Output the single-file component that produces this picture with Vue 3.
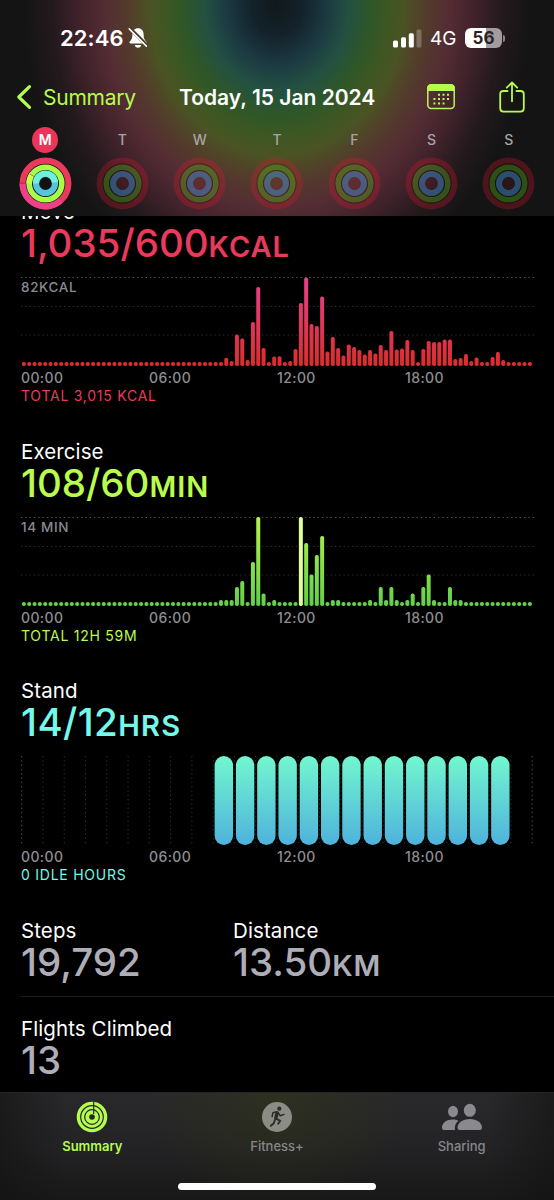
<script setup>
const SLOTS = 96
const PITCH = 5.326
const CHART_HEIGHT = 89

const MOVE = {
  38: 8.3, 39: 5, 40: 31.5, 41: 27.5, 42: 6, 43: 44, 44: 79, 45: 18, 47: 9.5,
  48: 9.7, 50: 5, 51: 17, 52: 63, 53: 88.5, 54: 42, 55: 40, 56: 69.5, 57: 14.5,
  58: 29, 59: 18, 60: 10.5, 61: 21.5, 62: 19, 63: 16, 64: 11.5, 65: 16, 66: 12.5,
  67: 21, 68: 16, 69: 35, 70: 16.5, 71: 17.5, 72: 26, 73: 16, 75: 17, 76: 25,
  77: 24, 78: 24, 79: 26.5, 80: 26.5, 81: 7, 82: 8, 83: 12, 84: 5, 85: 8.5,
  88: 9, 89: 14, 90: 6
}

const EXERCISE = {
  37: 6, 38: 6, 39: 6, 40: 19, 41: 25, 43: 44, 44: 89, 45: 12.5, 47: 6, 52: 89,
  53: 63, 54: 31.5, 55: 51, 56: 70, 58: 6, 59: 6, 65: 6, 67: 19, 68: 6, 69: 19,
  70: 6, 72: 6, 73: 12.5, 75: 19, 76: 31.5, 77: 6, 80: 19, 81: 6, 82: 6
}

function toBars(values) {
  return Array.from({ length: SLOTS }, (_, i) => {
    const h = values[i] ?? 4
    return { x: 0.9 + i * PITCH, y: CHART_HEIGHT - h, h }
  })
}

const hours = ['00:00', '06:00', '12:00', '18:00']

const sections = [
  { id: 'move', title: 'Move', value: '1,035/600', unit: 'KCAL', max: '82KCAL', total: 'TOTAL 3,015 KCAL', bars: toBars(MOVE) },
  { id: 'exercise', title: 'Exercise', value: '108/60', unit: 'MIN', max: '14 MIN', total: 'TOTAL 12H 59M', bars: toBars(EXERCISE), peak: 52 },
  { id: 'stand', title: 'Stand', value: '14/12', unit: 'HRS', total: '0 IDLE HOURS' }
]

const standHours = Array.from({ length: 14 }, (_, i) => 9 + i)
const days = ['M', 'T', 'W', 'T', 'F', 'S', 'S']
</script>

<template>
  <div class="screen">
    <header>
      <div class="status">
        <span class="clock">22:46</span>
        <svg class="bell" width="20" height="22" viewBox="0 0 20 22">
          <path d="M10 1.2c-3.4 0-5.6 2.4-5.6 6 0 4.200-1 5.600-2.600 7.300-.8.9-.4 2 .8 2h14.800c1.200 0 1.600-1.100.8-2-1.600-1.700-2.600-3.100-2.600-7.300 0-3.600-2.200-6-5.600-6z" fill="#fff" />
          <path d="M6.800 18h6.400c-.3 1.700-1.500 2.700-3.200 2.700S7.100 19.700 6.800 18z" fill="#fff" />
          <path d="M1.800 1.300l17.200 17.200" stroke="#4d3a2b" stroke-width="3.600" />
          <path d="M1.200 1.900l17.200 17.200" stroke="#fff" stroke-width="1.500" stroke-linecap="round" />
        </svg>
        <span class="spacer"></span>
        <svg class="signal" width="29" height="19" viewBox="0 0 29 19" fill="#fff">
          <rect x="0" y="11.500" width="5" height="7" rx="1.500" />
          <rect x="8" y="8.200" width="5" height="10.300" rx="1.500" />
          <rect x="15.800" y="4.200" width="5" height="14.300" rx="1.500" />
          <rect x="23.500" y=".5" width="5" height="18" rx="1.500" opacity=".25" />
        </svg>
        <span class="network">4G</span>
        <span class="battery"><b>56</b></span>
        <span class="nub"></span>
      </div>

      <nav class="bar">
        <svg width="16" height="26" viewBox="0 0 16 26" fill="none">
          <path d="M13.500 2.700L2.800 13l10.700 10.300" stroke="#b5fc4c" stroke-width="3.200" stroke-linecap="round" stroke-linejoin="round" />
        </svg>
        <span class="back">Summary</span>
        <span class="date">Today, 15 Jan 2024</span>
        <svg class="calendar" width="28" height="26" viewBox="0 0 28 26">
          <rect x=".8" y=".8" width="26.400" height="23.800" rx="3.500" fill="none" stroke="#b5fc4c" stroke-width="1.500" />
          <path d="M.2 7V4.200Q.2.200 4.200.2h19.600q4 0 4 4V7z" fill="#b5fc4c" />
          <g fill="#b5fc4c">
            <path d="M11 9.700h2v2h-2zM15.500 9.700h2v2h-2zM20 9.700h2v2h-2z" />
            <path d="M6.400 14.100h2v2h-2zM11 14.100h2v2h-2zM15.500 14.100h2v2h-2zM20 14.100h2v2h-2z" />
            <path d="M6.400 18.600h2v2h-2zM11 18.600h2v2h-2zM15.500 18.600h2v2h-2z" />
          </g>
        </svg>
        <svg class="share" width="26" height="32" viewBox="0 0 26 32" fill="none" stroke="#b5fc4c" stroke-width="1.800" stroke-linecap="round" stroke-linejoin="round">
          <path d="M8.500 10H4.500Q1.200 10 1.200 13.300v14Q1.200 30.600 4.500 30.600h17Q24.800 30.600 24.800 27.300v-14Q24.800 10 21.500 10h-4" />
          <path d="M13 20.300V1.700M7.800 6.700L13 1.500l5.200 5.200" />
        </svg>
      </nav>

      <div class="week">
        <div v-for="(day, i) in days" :key="i" class="day" :class="{ today: i === 0 }">
          <span class="letter">{{ day }}</span>
          <svg width="53" height="53" viewBox="-26.500 -26.500 53 53" fill="none">
            <template v-if="i === 0">
              <circle r="26" fill="#111" />
              <circle r="22.900" stroke="#e93a5d" stroke-width="6.100" />
              <path d="M-22.900 0A22.900 22.900 0 0 0 15 17.300" stroke="#ee4088" stroke-width="6.100" />
              <circle r="16.300" stroke="#a9fb4a" stroke-width="5.600" />
              <path d="M-16.300 0A16.300 16.300 0 0 1-13.500-9.200" stroke="#cafc4d" stroke-width="5.600" />
              <circle r="9.500" stroke="#55c4dd" stroke-width="6.200" />
              <path d="M-9.500 0A9.500 9.500 0 0 1 9.500-1" stroke="#6ff0dc" stroke-width="6.200" />
              <path d="M-26-.3h6.200M-15.600-9.500l4.600 2.800" stroke="#8c1f38" stroke-width=".8" opacity=".7" />
            </template>
            <template v-else>
              <circle r="22.900" stroke="#d8182e" stroke-width="6" opacity=".3" />
              <circle r="16.300" stroke="#5fb814" stroke-width="5.600" opacity=".36" />
              <circle r="9.500" stroke="#4694dc" stroke-width="6.200" opacity=".45" />
              <circle r="6" fill="#a02030" opacity=".15" />
              <circle r="19.700" stroke="#120b0e" stroke-width="1" opacity=".3" />
              <circle r="13" stroke="#120b0e" stroke-width="1.200" opacity=".35" />
            </template>
          </svg>
        </div>
      </div>
    </header>

    <main>
      <section v-for="s in sections" :key="s.id" :class="s.id">
        <h2>{{ s.title }}</h2>
        <p class="value">{{ s.value }}<small>{{ s.unit }}</small></p>
        <div class="chart">
          <span v-if="s.max" class="max">{{ s.max }}</span>
          <svg v-if="s.bars" width="513" height="89" viewBox="0 0 513 89">
            <defs>
              <linearGradient :id="'fill-' + s.id" gradientUnits="userSpaceOnUse" x1="0" y1="89" x2="0" y2="0">
                <stop offset="0" class="low" />
                <stop offset="1" class="high" />
              </linearGradient>
            </defs>
            <path d="M0 .5h513" class="guide strong" />
            <path d="M0 29.500h513M0 58h513" class="guide" />
            <rect
              v-for="(bar, i) in s.bars"
              :key="i"
              :x="bar.x"
              :y="bar.y"
              width="4"
              :height="bar.h"
              rx="1.800"
              :fill="i === s.peak ? '#e0fd9c' : `url(#fill-${s.id})`"
            />
          </svg>
          <svg v-else width="513" height="89" viewBox="0 0 513 89">
            <defs>
              <linearGradient id="fill-stand" x1="0" y1="1" x2="0" y2="0">
                <stop offset="0" class="low" />
                <stop offset="1" class="high" />
              </linearGradient>
            </defs>
            <path v-for="n in 25" :key="n" :d="`M${0.7 + (n - 1) * 21.27} 0v89`" class="guide" :class="{ strong: n === 1 || n === 25 }" />
            <rect v-for="h in standHours" :key="h" :x="2.200 + h * 21.27" y="0" width="18.400" height="89" rx="9.200" fill="url(#fill-stand)" />
          </svg>
        </div>
        <div class="hours">
          <span v-for="hour in hours" :key="hour">{{ hour }}</span>
        </div>
        <p class="total">{{ s.total }}</p>
      </section>

      <div class="stats">
        <div class="stat steps">
          <h2>Steps</h2>
          <p class="value">19,792</p>
        </div>
        <div class="stat distance">
          <h2>Distance</h2>
          <p class="value">13.50<small>KM</small></p>
        </div>
      </div>
      <div class="stats">
        <div class="stat flights">
          <h2>Flights Climbed</h2>
          <p class="value">13</p>
        </div>
      </div>
    </main>

    <footer>
      <div class="tabs">
        <div class="tab active">
          <svg width="32" height="32" viewBox="-16 -16 32 32" fill="none">
            <circle r="15.300" fill="#b5fc4c" />
            <g stroke="#25282a" stroke-width="1.200">
              <circle r="11.300" />
              <circle r="7.300" />
              <path d="M1.700-15v12" />
            </g>
            <circle r="2.800" fill="#25282a" />
          </svg>
          <span>Summary</span>
        </div>
        <div class="tab">
          <svg width="32" height="32" viewBox="-16 -16 32 32" fill="none">
            <circle r="15" fill="#8b8c85" />
            <circle cx="2.300" cy="-8.300" r="2.100" fill="#2c2e26" />
            <g stroke="#2c2e26" stroke-linecap="round" stroke-linejoin="round">
              <path d="M.2-4.200L-1.200 1" stroke-width="3.400" />
              <path d="M-.3-5.300L-4.100-4.200-4.900-.5M1.600-3.600L3.300-1.200 7-2.600" stroke-width="1.500" />
              <path d="M-.8 1.600L3.300 3.800 1.200 6.800M-2 2.700L-3.200 6.200-6.200 8.800" stroke-width="1.900" />
            </g>
          </svg>
          <span>Fitness+</span>
        </div>
        <div class="tab">
          <svg width="42" height="32" viewBox="0 0 42 32">
            <g fill="#89898e">
              <ellipse cx="12" cy="10.500" rx="5" ry="5.700" />
              <ellipse cx="28.800" cy="9.300" rx="6" ry="6.500" />
              <path d="M1 26.800C1 22 5.500 18.500 11.700 18.500c2.300 0 4.200.4 5.700 1.200-2.600 2.200-3.900 5-3.500 9.300H3Q1 29 1 26.800z" />
              <path d="M16.500 26.800c0-5 5.300-8.800 12.300-8.800S41 21.800 41 26.800Q41 29 38.600 29H18.900Q16.500 29 16.500 26.800z" />
            </g>
          </svg>
          <span>Sharing</span>
        </div>
      </div>
      <div class="home"></div>
    </footer>
  </div>
</template>

<style>
body {
  margin: 0;
  background: #000;
}
</style>

<style scoped>
.screen {
  width: 554px;
  height: 1200px;
  display: flex;
  flex-direction: column;
  overflow: hidden;
  background: #000;
  color: #fff;
  font-family: Inter, "Liberation Sans", sans-serif;
}

h2,
p {
  margin: 0;
}

header {
  height: 216px;
  flex: none;
  box-sizing: border-box;
  padding-top: 24px;
  background: radial-gradient(ellipse 254px 300px at 277px 5px,
    #12191c 0%, #13222a 10%, #1c3a42 20%, #235042 28%, #2f5728 37%,
    #3b5723 43%, #4a5324 50%, #533d2b 58%, #542c34 68%, #40222b 78%, #241a1d 88%, #141414 100%);
}

.status {
  display: flex;
  align-items: center;
  height: 28px;
  padding: 0 49px 0 60px;
}

.clock {
  width: 67px;
  font-size: 22px;
  font-weight: 600;
  letter-spacing: 0.1px;
}

.bell {
  margin-left: 1px;
}

.spacer {
  flex: 1;
}

.signal {
  margin-right: 8px;
}

.network {
  width: 35px;
  font-size: 19px;
}

.battery {
  width: 37px;
  height: 20px;
  border-radius: 6px;
  background: linear-gradient(90deg, #fff 56%, #a29c9e 56%);
  color: #2b2226;
  text-align: center;
  font-size: 17px;
  line-height: 20px;
}

.battery b {
  font-weight: 700;
}

.nub {
  width: 2px;
  height: 7px;
  margin-left: 1px;
  border-radius: 0 2px 2px 0;
  background: #8a8587;
}

.bar {
  display: flex;
  align-items: center;
  height: 32px;
  margin-top: 29px;
  padding: 0 29px 0 16px;
}

.back {
  width: 136px;
  padding-left: 11px;
  color: #b5fc4c;
  font-size: 21px;
  letter-spacing: -0.25px;
}

.date {
  width: 200px;
  font-size: 21px;
  font-weight: 600;
  white-space: nowrap;
}

.calendar {
  margin-left: 48px;
}

.share {
  margin-left: auto;
}

.week {
  display: flex;
  padding: 0 6.500px;
  margin-top: 14px;
}

.day {
  flex: 1;
  display: flex;
  flex-direction: column;
  align-items: center;
  gap: 4px;
}

.letter {
  width: 26px;
  height: 26px;
  border-radius: 50%;
  color: #a8a3a5;
  text-align: center;
  font-size: 14px;
  font-weight: 500;
  line-height: 26px;
}

.today .letter {
  background: #ea3558;
  color: #fff;
  font-weight: 600;
}

main {
  height: 876px;
  flex: none;
  overflow: hidden;
}

section {
  height: 239.500px;
  padding-left: 21px;
}

section:first-child {
  margin-top: -16px;
}

h2 {
  height: 24px;
  font-size: 20.500px;
  font-weight: 400;
  line-height: 24px;
  letter-spacing: 0.1px;
}

.value {
  height: 38px;
  font-size: 38.500px;
  font-weight: 500;
  line-height: 38px;
  white-space: nowrap;
}

.value small {
  font-size: 29px;
  font-weight: 600;
  letter-spacing: 1px;
}

.stand .value {
  letter-spacing: 0.4px;
}

.stand .value small {
  letter-spacing: 1.300px;
}

.chart {
  position: relative;
  height: 89px;
  margin-top: 15px;
}

.chart svg {
  display: block;
}

.max {
  position: absolute;
  top: 1px;
  left: 0;
  color: #8a8a8f;
  font-size: 13.500px;
  font-weight: 500;
  line-height: 18px;
  letter-spacing: 0.65px;
}

.guide {
  stroke: #303032;
  stroke-width: 1;
  stroke-dasharray: 1.300 3;
}

.guide.strong {
  stroke: #555558;
}

.hours {
  display: grid;
  grid-template-columns: repeat(4, 128px);
  margin-top: 3px;
  color: #8e8e93;
  font-size: 14px;
  font-weight: 500;
  line-height: 18px;
  letter-spacing: 0.4px;
}

.total {
  font-size: 14px;
  line-height: 18px;
  letter-spacing: 0.75px;
}

.move .value,
.move .total {
  color: #ea3a5b;
}

.exercise .value,
.exercise .total {
  color: #b9fb4f;
}

.stand .value,
.stand .total {
  color: #74f8ea;
}

.move .low { stop-color: #dc2c2c; }
.move .high { stop-color: #e8418c; }
.exercise .low { stop-color: #62cf4a; }
.exercise .high { stop-color: #b6f34e; }
.stand .low { stop-color: #4fb2dc; }
.stand .high { stop-color: #72f7cf; }

.stats {
  display: grid;
  grid-template-columns: 212px 1fr;
  height: 77px;
  margin-left: 21px;
}

.stats + .stats {
  border-top: 1px solid #1f1f20;
  padding-top: 20px;
}

.stat .value {
  color: #aeaeb8;
}

footer {
  height: 108px;
  flex: none;
  box-sizing: border-box;
  display: flex;
  flex-direction: column;
  align-items: center;
  border-top: 1px solid #252527;
  background:
    radial-gradient(ellipse 130px 100px at 50% 10%, rgba(50, 55, 20, 0.5), transparent),
    linear-gradient(90deg, rgba(18, 18, 18, 0.6), transparent 12%, transparent 88%, rgba(18, 18, 18, 0.6)),
    linear-gradient(#29292b, #232325 50%, #181818);
}

.tabs {
  display: flex;
  width: 100%;
  padding-top: 8px;
}

.tab {
  flex: 1;
  display: flex;
  flex-direction: column;
  align-items: center;
  gap: 4px;
  color: #87878a;
  font-size: 13px;
  font-weight: 500;
  line-height: 18px;
}

.tab.active {
  color: #b5fc4c;
  font-weight: 600;
}

.home {
  width: 198px;
  height: 7px;
  margin-top: 28px;
  border-radius: 4px;
  background: #fff;
}
</style>
